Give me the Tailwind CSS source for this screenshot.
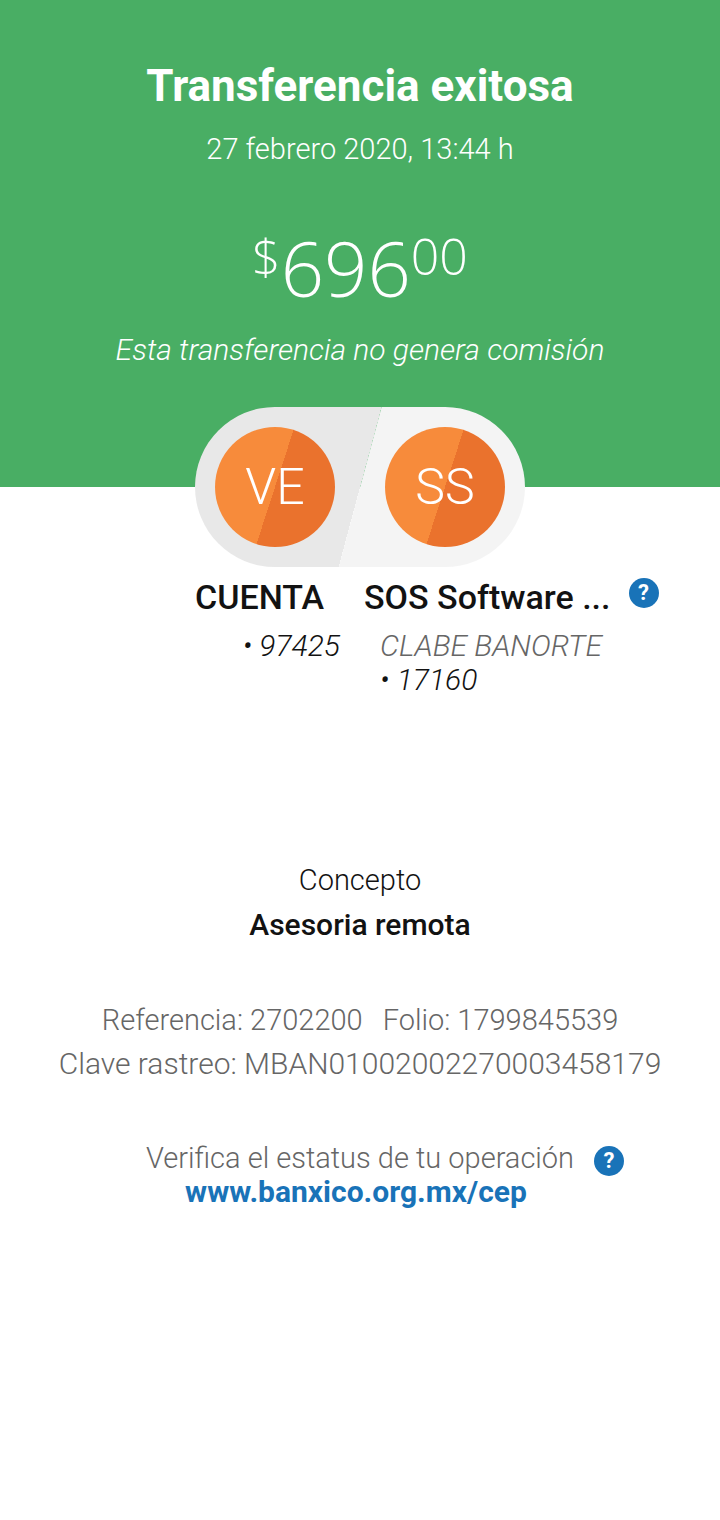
<!DOCTYPE html>
<html lang="es">
<head>
<meta charset="utf-8">
<meta name="viewport" content="width=device-width, initial-scale=1">
<title>Transferencia exitosa</title>
<script src="https://cdn.jsdelivr.net/npm/@tailwindcss/browser@4"></script>
</head>
<body class="min-h-screen bg-white font-['Roboto','Liberation_Sans',sans-serif] text-[30px] leading-[34px] font-light text-[#121212]">
<header class="flex flex-col items-center bg-[#49ae64] px-4 pt-[62px] pb-[120px] text-center text-white">
  <h1 class="text-[44px] leading-[48px] font-bold">Transferencia exitosa</h1>
  <p class="mt-[22px] text-[29px]">27 febrero 2020, 13:44 h</p>
  <p class="mt-[58px] flex items-start font-['Open_Sans','Roboto',sans-serif] text-[50px] leading-[64px]">
    <span>$</span><span class="text-[76px] leading-[87px]">696</span><span>00</span>
  </p>
  <p class="mt-[22px] italic">Esta transferencia no genera comisión</p>
</header>
<main class="flex flex-col">
  <div class="relative -mt-20 flex gap-[50px] self-center rounded-full bg-[linear-gradient(105deg,#e8e8e8_50%,#f4f4f499_50%,#f4f4f4_50.2%)] p-5 text-[50px] text-white">
    <div class="flex size-[120px] items-center justify-center rounded-full bg-[linear-gradient(108deg,#f78b3b_50%,#ea722d_50%)]">VE</div>
    <div class="flex size-[120px] items-center justify-center rounded-full bg-[linear-gradient(108deg,#f78b3b_50%,#ea722d_50%)]">SS</div>
  </div>
  <section class="grid grid-cols-2 pt-2">
    <div class="flex flex-col items-end pr-5">
      <h2 class="pr-4 text-[34px] leading-[44px] font-medium">CUENTA</h2>
      <p class="mt-[10px] italic">• 97425</p>
    </div>
    <div class="pl-1">
      <div class="flex items-start gap-[18px]">
        <h2 class="text-[34px] leading-[44px] font-medium">SOS Software ...</h2>
        <button type="button" aria-label="Ayuda sobre la cuenta destino" class="mt-[3px] flex size-[30px] shrink-0 items-center justify-center rounded-full bg-[#1973b8] text-[22px] font-bold text-white">?</button>
      </div>
      <p class="mt-[10px] pl-4 text-[#666666] italic">CLABE BANORTE</p>
      <p class="pl-4 italic">• 17160</p>
    </div>
  </section>
  <section class="mt-[166px] flex flex-col items-center gap-[11px] text-center">
    <h3 class="text-[29px]">Concepto</h3>
    <p class="font-medium">Asesoria remota</p>
  </section>
  <section class="mt-[61px] flex flex-col items-center gap-[10px] text-center text-[29px] text-[#666666]">
    <p class="flex flex-wrap justify-center gap-x-5"><span>Referencia: 2702200</span><span>Folio: 1799845539</span></p>
    <p class="text-[30px]">Clave rastreo: MBAN01002002270003458179</p>
  </section>
  <section class="mt-[60px] flex items-start justify-center gap-5 pl-[50px] text-center text-[29px] text-[#666666]">
    <p class="flex flex-col items-center">Verifica el estatus de tu operación <a href="https://www.banxico.org.mx/cep" class="mr-2 text-[30px] font-bold text-[#1973b8]">www.banxico.org.mx/cep</a></p>
    <button type="button" aria-label="Ayuda sobre el estatus" class="mt-[5px] flex size-[30px] shrink-0 items-center justify-center rounded-full bg-[#1973b8] text-[22px] font-bold text-white">?</button>
  </section>
</main>
</body>
</html>
